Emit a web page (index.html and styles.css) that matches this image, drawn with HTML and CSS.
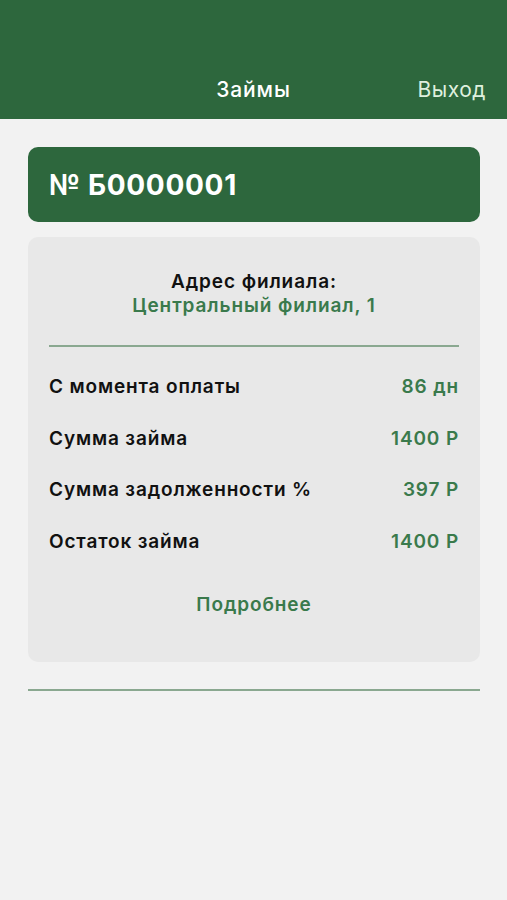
FILE: index.html
```html
<!DOCTYPE html>
<html lang="ru">
<head>
<meta charset="utf-8">
<link rel="stylesheet" href="styles.css">
</head>
<body>
<header class="topbar">
  <div class="topbar-title">Займы</div>
  <div class="topbar-exit">Выход</div>
</header>
<main class="content">
  <div class="loan-head">№ Б0000001</div>
  <section class="loan-card">
    <div class="branch">
      <div class="branch-label">Адрес филиала:</div>
      <div class="branch-value">Центральный филиал, 1</div>
    </div>
    <div class="divider"></div>
    <div class="rows">
      <div class="row"><span class="row-label">С момента оплаты</span><span class="row-value">86 дн</span></div>
      <div class="row"><span class="row-label">Сумма займа</span><span class="row-value">1400 Р</span></div>
      <div class="row"><span class="row-label">Сумма задолженности %</span><span class="row-value">397 Р</span></div>
      <div class="row"><span class="row-label">Остаток займа</span><span class="row-value">1400 Р</span></div>
    </div>
    <div class="more">Подробнее</div>
  </section>
  <div class="bottom-divider"></div>
</main>
</body>
</html>
```
FILE: styles.css
```css
* { box-sizing: border-box; }
html, body { margin: 0; padding: 0; }
body {
  background: #f2f2f2;
  font-family: Inter, "Noto Sans", sans-serif;
  width: 507px;
  height: 900px;
  overflow: hidden;
}
.topbar {
  height: 119px;
  background: #2d673d;
  position: relative;
  display: flex;
  align-items: flex-end;
  justify-content: center;
  padding-bottom: 16px;
}
.topbar-title {
  color: #ffffff;
  font-size: 21px;
  font-weight: 500;
  line-height: 26px;
  letter-spacing: 0.9px;
}
.topbar-exit {
  position: absolute;
  right: 21px;
  bottom: 16px;
  color: #dff0df;
  font-size: 21px;
  font-weight: 400;
  line-height: 26px;
  letter-spacing: 0.5px;
}
.content {
  padding: 28px 27px 0 28px;
}
.loan-head {
  height: 75px;
  background: #2d673d;
  border-radius: 10px;
  color: #ffffff;
  font-size: 28px;
  font-weight: 700;
  letter-spacing: 0.7px;
  display: flex;
  align-items: center;
  padding-left: 21px;
  padding-top: 1px;
}
.loan-card {
  margin-top: 15px;
  background: #e8e8e8;
  border-radius: 10px;
  padding: 33px 21px 0 21px;
  height: 425px;
}
.branch {
  text-align: center;
  font-size: 19px;
  font-weight: 600;
  line-height: 24px;
  letter-spacing: 0.9px;
}
.branch-label { color: #111; }
.branch-value { color: #3a7a4c; }
.divider {
  margin-top: 27px;
  height: 2px;
  background: #8aa890;
}
.rows {
  margin-top: 14px;
  display: flex;
  flex-direction: column;
}
.row {
  height: 51.5px;
  display: flex;
  justify-content: space-between;
  align-items: center;
  font-size: 19px;
  font-weight: 600;
  letter-spacing: 0.85px;
}
.row-label { color: #111; }
.row-value { color: #3a7a4c; }
.more {
  margin-top: 26px;
  text-align: center;
  color: #3a7a4c;
  font-size: 19px;
  font-weight: 600;
  line-height: 24px;
  letter-spacing: 0.9px;
}
.bottom-divider {
  margin-top: 27px;
  height: 2px;
  background: #8aa890;
}
```
